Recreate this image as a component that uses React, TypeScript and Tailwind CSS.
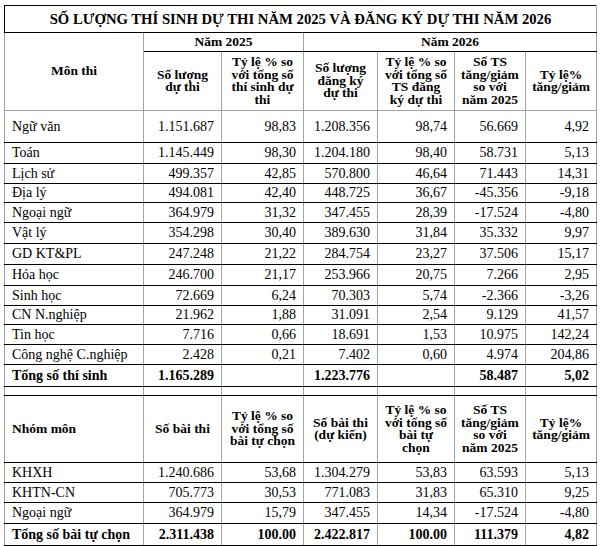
import React from "react";

type Row = { name: string; v: string[]; h: string; bold?: boolean };

const rows1: Row[] = [
  { name: "Ngữ văn", v: ["1.151.687", "98,83", "1.208.356", "98,74", "56.669", "4,92"], h: "h-[32px]" },
  { name: "Toán", v: ["1.145.449", "98,30", "1.204.180", "98,40", "58.731", "5,13"], h: "h-[21px]" },
  { name: "Lịch sử", v: ["499.357", "42,85", "570.800", "46,64", "71.443", "14,31"], h: "h-[20px]" },
  { name: "Địa lý", v: ["494.081", "42,40", "448.725", "36,67", "-45.356", "-9,18"], h: "h-[19px]" },
  { name: "Ngoại ngữ", v: ["364.979", "31,32", "347.455", "28,39", "-17.524", "-4,80"], h: "h-[20px]" },
  { name: "Vật lý", v: ["354.298", "30,40", "389.630", "31,84", "35.332", "9,97"], h: "h-[21px]" },
  { name: "GD KT&PL", v: ["247.248", "21,22", "284.754", "23,27", "37.506", "15,17"], h: "h-[21px]" },
  { name: "Hóa học", v: ["246.700", "21,17", "253.966", "20,75", "7.266", "2,95"], h: "h-[21px]" },
  { name: "Sinh học", v: ["72.669", "6,24", "70.303", "5,74", "-2.366", "-3,26"], h: "h-[20px]" },
  { name: "CN N.nghiệp", v: ["21.962", "1,88", "31.091", "2,54", "9.129", "41,57"], h: "h-[19px]" },
  { name: "Tin học", v: ["7.716", "0,66", "18.691", "1,53", "10.975", "142,24"], h: "h-[20px]" },
  { name: "Công nghệ C.nghiệp", v: ["2.428", "0,21", "7.402", "0,60", "4.974", "204,86"], h: "h-[20px]" },
  { name: "Tổng số thí sinh", v: ["1.165.289", "", "1.223.776", "", "58.487", "5,02"], h: "h-[22px]", bold: true },
];

const rows2: Row[] = [
  { name: "KHXH", v: ["1.240.686", "53,68", "1.304.279", "53,83", "63.593", "5,13"], h: "h-[20px]" },
  { name: "KHTN-CN", v: ["705.773", "30,53", "771.083", "31,83", "65.310", "9,25"], h: "h-[20px]" },
  { name: "Ngoại ngữ", v: ["364.979", "15,79", "347.455", "14,34", "-17.524", "-4,80"], h: "h-[21px]" },
  { name: "Tổng số bài tự chọn", v: ["2.311.438", "100.00", "2.422.817", "100.00", "111.379", "4,82"], h: "h-[22px]", bold: true },
];

const cell = "border border-x-[#a3a3a3] border-y-black p-0 align-middle";
const head = cell + " text-center font-bold text-[13.5px] leading-[12.5px]";

const Body = ({ rows }: { rows: Row[] }) => (
  <>
    {rows.map((r) => (
      <tr key={r.name} className={r.h}>
        <td className={`${cell} pl-[7px] text-left ${r.bold ? "font-bold" : ""}`}>{r.name}</td>
        {r.v.map((x, i) => (
          <td key={i} className={`${cell} pr-[7px] text-right ${r.bold ? "font-bold" : ""}`}>
            {x}
          </td>
        ))}
      </tr>
    ))}
  </>
);

export default function App() {
  return (
    <div
      className="w-[600px] h-[546px] bg-white pt-[5px] pl-[4px] overflow-hidden text-black"
      style={{ fontFamily: '"Liberation Serif", "Times New Roman", serif' }}
    >
      <table className="table-fixed border-collapse w-[593px] text-[14px] leading-[16px] border-l-black border-r-[#8a8a8a]">
        <colgroup>
          <col className="w-[139px]" />
          <col className="w-[78px]" />
          <col className="w-[82px]" />
          <col className="w-[74px]" />
          <col className="w-[77px]" />
          <col className="w-[71px]" />
          <col className="w-[71px]" />
        </colgroup>
        <tbody>
          <tr className="h-[27px]">
            <td colSpan={7} className={`${cell} border-l-black text-center font-bold text-[14.7px]`}>
              SỐ LƯỢNG THÍ SINH DỰ THI NĂM 2025 VÀ ĐĂNG KÝ DỰ THI NĂM 2026
            </td>
          </tr>
          <tr className="h-[19px]">
            <td rowSpan={2} className={`${head} border-b-[#a3a3a3]`}>Môn thi</td>
            <td colSpan={2} className={head}>Năm 2025</td>
            <td colSpan={4} className={head}>Năm 2026</td>
          </tr>
          <tr className="h-[59px]">
            <td className={`${head} border-b-[#a3a3a3]`}>Số lượng<br />dự thi</td>
            <td className={`${head} border-b-[#a3a3a3]`}>Tỷ lệ % so<br />với tổng số<br />thí sinh dự<br />thi</td>
            <td className={`${head} border-b-[#a3a3a3]`}>Số lượng<br />đăng ký<br />dự thi</td>
            <td className={`${head} border-b-[#a3a3a3]`}>Tỷ lệ % so<br />với tổng số<br />TS đăng<br />ký dự thi</td>
            <td className={`${head} border-b-[#a3a3a3]`}>Số TS<br />tăng/giảm<br />so với<br />năm 2025</td>
            <td className={`${head} border-b-[#a3a3a3]`}>Tỷ lệ%<br />tăng/giảm</td>
          </tr>
          <Body rows={rows1} />
          <tr className="h-[9px]">
            {[0, 1, 2, 3, 4, 5, 6].map((i) => (
              <td key={i} className={`${cell} border-y-[#a3a3a3]`}></td>
            ))}
          </tr>
          <tr className="h-[67px]">
            <td className={`${head} text-left pl-[7px]`}>Nhóm môn</td>
            <td className={head}>Số bài thi</td>
            <td className={head}>Tỷ lệ % so<br />với tổng số<br />bài tự chọn</td>
            <td className={head}>Số bài thi<br />(dự kiến)</td>
            <td className={head}>Tỷ lệ % so<br />với tổng số<br />bài tự<br />chọn</td>
            <td className={head}>Số TS<br />tăng/giảm<br />so với<br />năm 2025</td>
            <td className={head}>Tỷ lệ%<br />tăng/giảm</td>
          </tr>
          <Body rows={rows2} />
        </tbody>
      </table>
    </div>
  );
}
